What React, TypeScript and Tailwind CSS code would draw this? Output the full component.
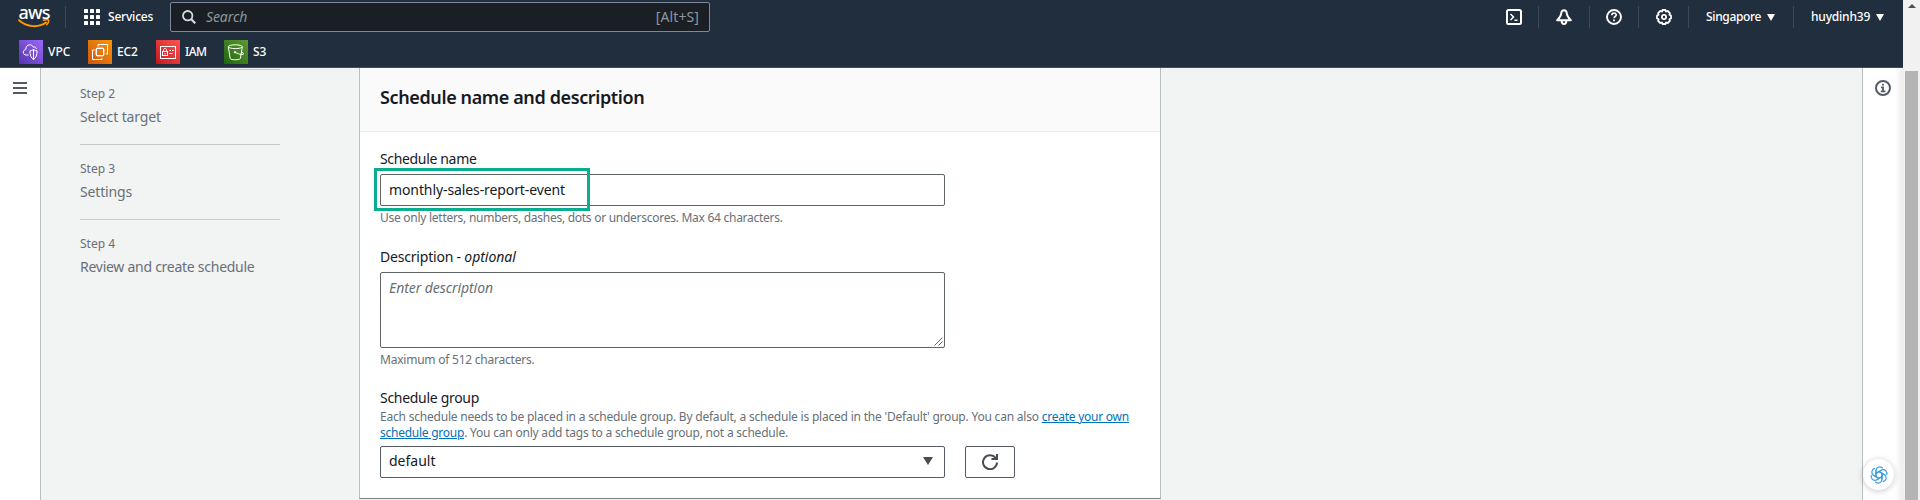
import type { ReactNode } from "react";

const steps = [
  { n: "Step 2", label: "Select target", cls: "tracking-[-0.12px]" },
  { n: "Step 3", label: "Settings", cls: "tracking-[-0.16px]" },
  { n: "Step 4", label: "Review and create schedule", cls: "tracking-[-0.265px]" },
];

function AwsLogo() {
  return (
    <div className="relative h-[22px] w-8 shrink-0">
      <span className="absolute -top-[5px] left-0 w-8 text-center text-[18px] leading-[22px] font-medium tracking-[-0.8px] text-white">aws</span>
      <svg className="absolute top-[13px] left-0" width="32" height="10" viewBox="0 0 32 10" fill="none" stroke="#f90" strokeLinecap="round">
        <path d="M1 1.2C9 8.4 20.5 9 28 3.6" strokeWidth="1.9" />
        <path d="M25.4 1.2c2-.8 4.8-.7 5.1-.1.3.7-.5 3.2-1.8 4.6" strokeWidth="1.5" />
      </svg>
    </div>
  );
}

function GridIcon() {
  const p = [0, 6, 12];
  return (
    <svg width="16" height="16" viewBox="0 0 16 16" fill="#fff">
      {p.map((y) => p.map((x) => <rect key={`${x}-${y}`} x={x} y={y} width="4" height="4" rx=".6" />))}
    </svg>
  );
}

function VpcIcon() {
  return (
    <svg width="24" height="24" viewBox="0 0 24 24" fill="none" stroke="#fff" strokeWidth="1">
      <path d="M9.5 15H7.200C5.300 15 4.300 13.700 4.300 12.200c0-1.600 1.200-2.500 2.500-2.700-.1-2.700 1.600-4.700 3.900-4.700 1.700 0 2.900.8 3.600 2.400 1.500-.7 2.900.1 3 1.700" />
      <path d="M14.5 9.500c-1.200.9-2.300 1.200-3.500 1.300 0 4.200.7 7 3.500 8.700 2.800-1.700 3.500-4.500 3.500-8.700-1.200-.1-2.300-.4-3.500-1.300zM14.500 9.500v10" />
    </svg>
  );
}

function Ec2Icon() {
  return (
    <svg width="24" height="24" viewBox="0 0 24 24" fill="none" stroke="#fff" strokeWidth="1">
      <path d="M10 6.500v-2h9.500V14H18M6.500 10h-2v9.500H14V18" />
      <rect x="8.500" y="8.500" width="7" height="7" />
      <path d="M10 6.800v1.700M12 6.800v1.700M14 6.800v1.700M10 15.500v1.700M12 15.500v1.700M14 15.500v1.700M6.800 10h1.700M6.800 12h1.700M6.800 14h1.700M15.500 10h1.700M15.500 12h1.700M15.500 14h1.700" strokeWidth=".8" />
    </svg>
  );
}

function IamIcon() {
  return (
    <svg width="24" height="24" viewBox="0 0 24 24" fill="none" stroke="#fff" strokeWidth="1">
      <rect x="4.500" y="6.500" width="15" height="12" />
      <rect x="6.500" y="11.500" width="5" height="4" />
      <path d="M7.500 11.500V10c0-2 3-2 3 0v1.500M9 13v1.200M13.500 10.500h1.500M16 10.500h1.700M13.500 13.500h3" />
    </svg>
  );
}

function S3Icon() {
  return (
    <svg width="24" height="24" viewBox="0 0 24 24" fill="none" stroke="#fff" strokeWidth="1">
      <ellipse cx="11.300" cy="6.700" rx="7" ry="1.900" />
      <path d="M4.300 6.900l1.900 11.600c.6 1.700 9.600 1.700 10.200 0L18.300 6.900" />
      <path d="M11 12.300c2.500 1.300 7.600 2.900 8.400 1.900.6-.8-1-1.800-2.100-2.400" />
      <circle cx="11" cy="12.200" r=".7" fill="#fff" />
    </svg>
  );
}

const favourites: { label: string; bg: string; icon: ReactNode; w: string }[] = [
  { label: "VPC", bg: "bg-linear-to-tr from-[#5435ae] to-[#a068fb]", icon: <VpcIcon />, w: "w-[69px]" },
  { label: "EC2", bg: "bg-linear-to-tr from-[#cc5410] to-[#fb9600]", icon: <Ec2Icon />, w: "w-[68px] tracking-[-0.2px]" },
  { label: "IAM", bg: "bg-linear-to-tr from-[#c4141c] to-[#ff5252]", icon: <IamIcon />, w: "w-[68px] tracking-[-0.6px]" },
  { label: "S3", bg: "bg-linear-to-tr from-[#1b660f] to-[#5f9a32]", icon: <S3Icon />, w: "w-[60px]" },
];

function Caret() {
  return (
    <svg width="8" height="7" viewBox="0 0 8 7" fill="#fff">
      <path d="M0 0h8L4 7z" />
    </svg>
  );
}

function IconCell({ children, w }: { children: ReactNode; w: string }) {
  return <div className={`flex h-[22px] items-center justify-center border-r border-[#3d4957] ${w}`}>{children}</div>;
}

function Header() {
  return (
    <header className="flex h-[68px] w-full shrink-0 flex-col border-b border-[#454d5b] bg-[#212e3d] text-white">
      <div className="flex h-[34px] items-center">
        <div className="mr-px flex h-[22px] w-[66px] border-r border-[#3d4957] pl-[18px]">
          <AwsLogo />
        </div>
        <div className="flex w-[103px] items-center pl-[17px]">
          <GridIcon />
          <span className="ml-2 text-xs font-medium tracking-[-0.2px]">Services</span>
        </div>
        <div className="flex h-[30px] w-[540px] items-center rounded-[2px] border border-[#7d8998] bg-[#1a1f26] pr-[10px] pl-[11px] text-sm text-[#8c979b]">
          <svg width="14" height="14" viewBox="0 0 14 14" fill="none" stroke="#d5dbdb" strokeWidth="1.800">
            <circle cx="5.700" cy="5.700" r="4.700" />
            <path d="M9 9l4.300 4.300" strokeWidth="2.200" />
          </svg>
          <span className="ml-[10px] tracking-[-0.1px] italic">Search</span>
          <span className="ml-auto tracking-[0.1px]">[Alt+S]</span>
        </div>
        <div className="ml-auto flex items-center">
          <IconCell w="w-[50px]">
            <svg width="16" height="16" viewBox="0 0 16 16" fill="none" stroke="#fff" strokeWidth="2">
              <rect x="1" y="1" width="14" height="14" rx="1.500" />
              <path d="M4.500 5l3 3-3 3M8.500 11.200h3" strokeWidth="1.500" />
            </svg>
          </IconCell>
          <IconCell w="w-[51px]">
            <svg width="16" height="16" viewBox="0 0 16 16" fill="none" stroke="#fff" strokeWidth="2" strokeLinejoin="round">
              <path d="M8 1.300C6.300 1.300 5.400 2.600 5.200 4.500 5 7 3.500 9 1.200 11.200h13.600C12.500 9 11 7 10.800 4.500 10.600 2.600 9.700 1.300 8 1.300z" />
              <path d="M5.700 12c0 4 4.600 4 4.600 0" />
            </svg>
          </IconCell>
          <IconCell w="w-[49px]">
            <svg width="16" height="16" viewBox="0 0 16 16" fill="none" stroke="#fff" strokeWidth="1.900">
              <circle cx="8" cy="8" r="7" />
              <path d="M5.800 6.300c0-3 4.500-2.900 4.500-.3 0 1.500-2.300 1.500-2.300 3.200" strokeWidth="1.600" />
              <path d="M8 10.500v1.700" strokeWidth="1.800" />
            </svg>
          </IconCell>
          <IconCell w="w-[50px]">
            <svg width="16" height="16" viewBox="0 0 16 16" fill="none" stroke="#fff" strokeWidth="1.800" strokeLinejoin="round">
              <path d="M6.600 1h2.800l.7 1.500 1.600-.5 2.200 2.200-.5 1.600L15 6.600v2.800l-1.600.8.5 1.600-2.200 2.200-1.600-.5-.7 1.500H6.600l-.7-1.500-1.600.5-2.200-2.200.5-1.600L1 9.400V6.600l1.600-.8-.5-1.600L4.300 2l1.600.5z" />
              <circle cx="8" cy="8" r="2.100" />
            </svg>
          </IconCell>
          <div className="flex h-[22px] w-[105px] items-center gap-[6px] border-r border-[#3d4957] pl-[17px] text-xs font-medium tracking-[-0.35px]">
            Singapore
            <Caret />
          </div>
          <div className="flex w-[109px] items-center gap-[6px] pl-[17px] text-xs font-medium tracking-[-0.2px]">
            huydinh39
            <Caret />
          </div>
        </div>
      </div>
      <div className="flex h-[33px] items-center pt-[3px] pl-[19px]">
        {favourites.map((f) => (
          <div key={f.label} className={`flex items-center gap-[5px] text-xs font-medium ${f.w}`}>
            <span className={`h-6 w-6 ${f.bg}`}>{f.icon}</span>
            {f.label}
          </div>
        ))}
      </div>
    </header>
  );
}

function Wizard() {
  return (
    <nav className="w-[318px] shrink-0 pt-px pl-[39px] text-[#687078]">
      {steps.map((s) => (
        <div key={s.n} className="h-[75px] w-[200px] border-t border-[#c6cacb] pt-[15px]">
          <div className="text-xs leading-[18px]">{s.n}</div>
          <div className={`mt-1 text-sm leading-[20px] ${s.cls}`}>{s.label}</div>
        </div>
      ))}
    </nav>
  );
}

function Form() {
  return (
    <section className="flex w-[802px] shrink-0 flex-col border-x border-b border-[#b9bdbe] border-b-[#7c8082] bg-white text-sm text-[#16191f]">
      <h2 className="h-[64px] shrink-0 border-b border-[#eaeded] bg-[#fafafa] pt-[17px] pl-5 text-[18px] leading-[24px] font-semibold tracking-[-0.38px]">
        Schedule name and description
      </h2>
      <div className="flex flex-col pt-[17px] pl-5">
        <label className="h-[25px] leading-[20px] tracking-[-0.34px]">Schedule name</label>
        <div className="relative flex h-8 w-[565px] items-center rounded-[2px] border border-[#5f6466] pl-2 tracking-[-0.1px]">
          monthly-sales-report-event
          <span className="absolute -top-[7px] -left-[7px] h-[43px] w-[216px] border-[3px] border-[#0aae8e]" />
        </div>
        <p className="mt-1 text-xs leading-[16px] tracking-[-0.27px] text-[#687078]">
          Use only letters, numbers, dashes, dots or underscores. Max 64 characters.
        </p>
        <label className="mt-[21px] h-[25px] leading-[20px] tracking-[-0.2px]">
          Description - <i className="tracking-[-0.05px]">optional</i>
        </label>
        <div className="flex h-[76px] w-[565px] justify-between rounded-[2px] border border-[#5f6466] pt-[5px] pl-2 leading-[20px] tracking-[-0.07px] text-[#687078] italic">
          Enter description
          <svg className="mr-px mb-px self-end" width="9" height="9" viewBox="0 0 9 9" stroke="#555" strokeWidth=".9">
            <path d="M.500 8.500l8-8M4.500 8.500l4-4" />
          </svg>
        </div>
        <p className="mt-1 text-xs leading-[16px] tracking-[-0.23px] text-[#687078]">Maximum of 512 characters.</p>
        <label className="mt-[20px] leading-[20px] tracking-[-0.3px]">Schedule group</label>
        <p className="mt-px mb-px w-[770px] text-xs leading-[16px] tracking-[-0.208px] text-[#687078]">
          Each schedule needs to be placed in a schedule group. By default, a schedule is placed in the 'Default' group. You can also{" "}
          <a className="tracking-[-0.25px] text-[#0073bb] underline">create your own<br />schedule group</a>. You can only add tags to a schedule group, not a schedule.
        </p>
        <div className="mt-1 flex gap-5">
          <div className="flex h-8 w-[565px] items-center justify-between rounded-[2px] border border-[#545b64] pr-[11px] pb-0.5 pl-2">
            default
            <svg width="10" height="8" viewBox="0 0 10 8" fill="#474d55">
              <path d="M0 0h10L5 8z" />
            </svg>
          </div>
          <button className="flex h-8 w-[50px] items-center justify-center rounded-[2px] border border-[#545b64]">
            <svg width="16" height="16" viewBox="0 0 16 16" fill="none" stroke="#474d55" strokeWidth="2">
              <path d="M15 8.500A7 7 0 1 1 13.600 4" />
              <path d="M15 0v5h-5.500" />
            </svg>
          </button>
        </div>
      </div>
    </section>
  );
}

function Assistant() {
  return (
    <div className="absolute right-[9px] bottom-[10px] flex h-[31px] w-[31px] items-center justify-center rounded-full bg-white shadow-[0_1px_6px_rgba(0,0,0,0.22)]">
      <svg width="20" height="20" viewBox="-10 -10 20 20" fill="none" stroke="#3b9ae0" strokeWidth="1.200" strokeLinejoin="round">
        {[0, 60, 120, 180, 240, 300].map((a) => (
          <path key={a} transform={`rotate(${a})`} d="M-3 2.200V-4.800A3.800 3.800 0 0 1 3.800-6.600M-3-1.600L2.600-4.900" />
        ))}
      </svg>
    </div>
  );
}

export default function App() {
  return (
    <div className="flex h-[500px] w-[1920px] overflow-hidden bg-white font-['Noto_Sans','Open_Sans',sans-serif]">
      <div className="flex w-[1903px] flex-col">
        <Header />
        <div className="relative flex h-[432px]">
          <aside className="w-[41px] shrink-0 border-r border-[#b9bfc0] bg-white pt-[14px] pl-[13px]">
            <div className="flex w-[14px] flex-col gap-[3px]">
              <span className="h-[2px] bg-[#545b64]" />
              <span className="h-[2px] bg-[#545b64]" />
              <span className="h-[2px] bg-[#545b64]" />
            </div>
          </aside>
          <main className="flex flex-1 bg-[#f2f3f3] pb-px">
            <Wizard />
            <Form />
          </main>
          <aside className="flex w-[41px] shrink-0 justify-center border-l border-[#b9bfc0] bg-linear-to-r from-white from-80% to-[#ededed] pt-3">
            <svg width="16" height="16" viewBox="0 0 16 16" fill="none" stroke="#545b64" strokeWidth="2">
              <circle cx="8" cy="8" r="7" />
              <path d="M8 3.700v1.900M6 7.300h2v4M5.800 11.300h4.600" strokeWidth="1.800" />
            </svg>
          </aside>
          <Assistant />
        </div>
      </div>
      <div className="flex w-[17px] flex-col items-center bg-[#f1f1f1] pt-1">
        <svg width="8" height="4" viewBox="0 0 8 4" fill="#505050">
          <path d="M0 4l4-4 4 4z" />
        </svg>
        <div className="mt-[63px] w-[13px] flex-1 bg-[#b4b4b4]" />
      </div>
    </div>
  );
}
